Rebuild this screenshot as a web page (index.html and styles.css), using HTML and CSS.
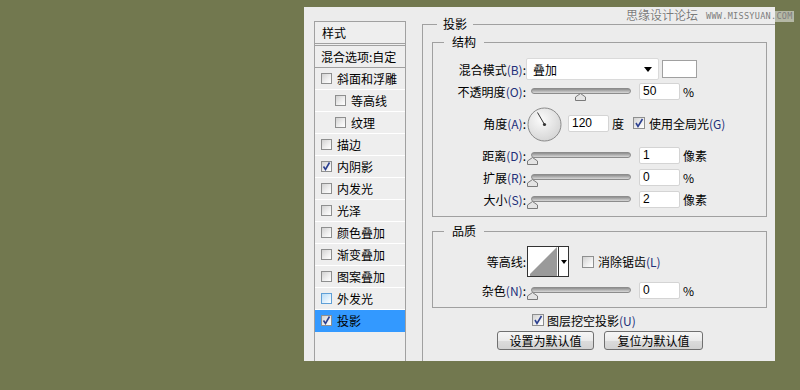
FILE: index.html
```html
<!DOCTYPE html>
<html lang="zh-CN">
<head>
<meta charset="utf-8">
<title>图层样式 - 投影</title>
<link rel="stylesheet" href="styles.css">
</head>
<body>
<div class="stage">
  <div class="dialog">
    <div class="styles-list">
      <div class="list-head">样式</div>
      <div class="list-blend">混合选项:自定</div>
      <div class="item"><span class="cb"></span><span>斜面和浮雕</span></div>
      <div class="item sub"><span class="cb"></span><span>等高线</span></div>
      <div class="item sub"><span class="cb"></span><span>纹理</span></div>
      <div class="item"><span class="cb"></span><span>描边</span></div>
      <div class="item"><span class="cb checked"><svg viewBox="0 0 11 11" width="11" height="11"><path d="M2.5 5.5 L4.5 8.5 L8.5 1.5" fill="none" stroke="#2b3f8f" stroke-width="1.6"/></svg></span><span>内阴影</span></div>
      <div class="item"><span class="cb"></span><span>内发光</span></div>
      <div class="item"><span class="cb"></span><span>光泽</span></div>
      <div class="item"><span class="cb"></span><span>颜色叠加</span></div>
      <div class="item"><span class="cb"></span><span>渐变叠加</span></div>
      <div class="item"><span class="cb"></span><span>图案叠加</span></div>
      <div class="item"><span class="cb hover"></span><span>外发光</span></div>
      <div class="item selected"><span class="cb checked"><svg viewBox="0 0 11 11" width="11" height="11"><path d="M2.5 5.5 L4.5 8.5 L8.5 1.5" fill="none" stroke="#2b3f8f" stroke-width="1.6"/></svg></span><span>投影</span></div>
    </div>

    <div class="main">
      <span class="legend legend-outer">投影</span>

      <div class="box structure">
        <span class="legend legend-inner">结构</span>

        <div class="row">
          <span class="label">混合模式<span class="mn">(B)</span>:</span>
          <div class="select"><span>叠加</span><svg class="arrow" width="8" height="5" viewBox="0 0 8 5"><path d="M0 0 H8 L4 5 Z" fill="#000"/></svg></div>
          <span class="swatch"></span>
        </div>

        <div class="row">
          <span class="label">不透明度<span class="mn">(O)</span>:</span>
          <div class="slider"><span class="track"></span><svg class="thumb" style="left:44px" width="11" height="8" viewBox="0 0 11 8"><path d="M0.5 7.5 V4 L5.5 0.5 L10.5 4 V7.5 Z" fill="#e4e4e4" stroke="#7a7a7a"/></svg></div>
          <span class="field">50</span>
          <span class="unit">%</span>
        </div>

        <div class="row row-angle">
          <span class="label">角度<span class="mn">(A)</span>:</span>
          <svg class="dial" width="35" height="35" viewBox="0 0 35 35">
            <defs>
              <radialGradient id="dg" cx="0.4" cy="0.35" r="0.7">
                <stop offset="0" stop-color="#fbfbfb"/>
                <stop offset="1" stop-color="#d4d4d4"/>
              </radialGradient>
            </defs>
            <circle cx="17.5" cy="17.5" r="16.5" fill="url(#dg)" stroke="#8a8a8a"/>
            <line x1="17.5" y1="17.5" x2="10.5" y2="5.5" stroke="#333" stroke-width="1"/>
            <circle cx="17.5" cy="17.5" r="1.6" fill="#333"/>
          </svg>
          <span class="field angle-field">120</span>
          <span class="unit deg">度</span>
          <span class="cb big checked global-cb"><svg viewBox="0 0 12 12" width="12" height="12"><path d="M3 6 L5 9.5 L9.5 2" fill="none" stroke="#2b3f8f" stroke-width="1.6"/></svg></span>
          <span class="cb-text">使用全局光<span class="mn">(G)</span></span>
        </div>

        <div class="row">
          <span class="label">距离<span class="mn">(D)</span>:</span>
          <div class="slider"><span class="track"></span><svg class="thumb" style="left:-4px" width="11" height="8" viewBox="0 0 11 8"><path d="M0.5 7.5 V4 L5.5 0.5 L10.5 4 V7.5 Z" fill="#e4e4e4" stroke="#7a7a7a"/></svg></div>
          <span class="field">1</span>
          <span class="unit">像素</span>
        </div>

        <div class="row">
          <span class="label">扩展<span class="mn">(R)</span>:</span>
          <div class="slider"><span class="track"></span><svg class="thumb" style="left:-4px" width="11" height="8" viewBox="0 0 11 8"><path d="M0.5 7.5 V4 L5.5 0.5 L10.5 4 V7.5 Z" fill="#e4e4e4" stroke="#7a7a7a"/></svg></div>
          <span class="field">0</span>
          <span class="unit">%</span>
        </div>

        <div class="row">
          <span class="label">大小<span class="mn">(S)</span>:</span>
          <div class="slider"><span class="track"></span><svg class="thumb" style="left:-4px" width="11" height="8" viewBox="0 0 11 8"><path d="M0.5 7.5 V4 L5.5 0.5 L10.5 4 V7.5 Z" fill="#e4e4e4" stroke="#7a7a7a"/></svg></div>
          <span class="field">2</span>
          <span class="unit">像素</span>
        </div>
      </div>

      <div class="box quality">
        <span class="legend legend-inner">品质</span>

        <div class="row row-contour">
          <span class="label">等高线:</span>
          <div class="contour">
            <svg class="curve" width="30" height="29" viewBox="0 0 30 29"><rect width="30" height="29" fill="#fff"/><path d="M2 27 L29 0 V29 H2 Z" fill="#9a9a9a"/></svg>
            <span class="contour-drop"><svg width="6" height="4" viewBox="0 0 6 4"><path d="M0 0 H6 L3 4 Z" fill="#000"/></svg></span>
          </div>
          <span class="cb big aa-cb"></span>
          <span class="cb-text">消除锯齿<span class="mn">(L)</span></span>
        </div>

        <div class="row row-noise">
          <span class="label">杂色<span class="mn">(N)</span>:</span>
          <div class="slider"><span class="track"></span><svg class="thumb" style="left:-4px" width="11" height="8" viewBox="0 0 11 8"><path d="M0.5 7.5 V4 L5.5 0.5 L10.5 4 V7.5 Z" fill="#e4e4e4" stroke="#7a7a7a"/></svg></div>
          <span class="field">0</span>
          <span class="unit">%</span>
        </div>
      </div>

      <div class="knockout">
        <span class="cb big checked"><svg viewBox="0 0 12 12" width="12" height="12"><path d="M3 6 L5 9.5 L9.5 2" fill="none" stroke="#2b3f8f" stroke-width="1.6"/></svg></span>
        <span class="cb-text">图层挖空投影<span class="mn">(U)</span></span>
      </div>

      <div class="buttons">
        <span class="btn btn-set">设置为默认值</span>
        <span class="btn btn-reset">复位为默认值</span>
      </div>
    </div>
  </div>

  <div class="watermark"><span class="wm-cn">思缘设计论坛</span><span class="wm-en">WWW.MISSYUAN.COM</span></div>
</div>
</body>
</html>
```

FILE: styles.css
```css
* { box-sizing: border-box; }

body {
  margin: 0;
  background: #72784f;
  font-family: "Noto Sans CJK SC", "Noto Sans", sans-serif;
  font-size: 12px;
  color: #000;
}

.stage {
  position: relative;
  width: 800px;
  height: 390px;
  padding: 7px 0 0 304px;
}

.dialog {
  width: 471px;
  height: 354px;
  background: #ececec;
  display: flex;
  align-items: flex-start;
  overflow: hidden;
}

/* ---------- left list ---------- */
.styles-list {
  margin: 14px 0 0 10px;
  width: 92px;
  height: 340px;
  border: 1px solid #a0a0a0;
  border-bottom: none;
  background: #eeeeee;
  flex-shrink: 0;
}

.list-head {
  height: 22px;
  line-height: 21px;
  padding-left: 7px;
  border-bottom: 1px solid #a0a0a0;
}

.list-blend {
  margin-top: 1px;
  height: 23px;
  line-height: 21px;
  padding-left: 6px;
  border-top: 1px solid #a0a0a0;
  border-bottom: 1px solid #a0a0a0;
  white-space: nowrap;
}

.item {
  display: flex;
  align-items: center;
  gap: 5px;
  height: 22px;
  padding-left: 6px;
  border-bottom: 1px solid #ffffff;
  white-space: nowrap;
}

.item.sub { padding-left: 20px; }

.item.selected {
  background: #3399ff;
  border-bottom-color: #3399ff;
}

.cb {
  display: inline-flex;
  align-items: center;
  justify-content: center;
  width: 11px;
  height: 11px;
  border: 1px solid #8e8f8f;
  background: linear-gradient(135deg, #d2d2d2 0%, #f0f0f0 60%, #ffffff 100%);
  flex-shrink: 0;
}

.cb svg { display: block; margin: -1px; }

.cb.big {
  width: 12px;
  height: 12px;
}

.cb.hover {
  border-color: #5f9fd6;
  background: linear-gradient(135deg, #b9dcf6 0%, #e2f1fc 60%, #ffffff 100%);
}

/* ---------- right column ---------- */
.main {
  position: relative;
  flex: 1;
  margin: 17px 0 0 16px;
  height: 337px;
  border-left: 1px solid #a0a0a0;
  border-top: 1px solid #a0a0a0;
}

.legend {
  position: absolute;
  top: -9px;
  line-height: 16px;
  background: #ececec;
  white-space: nowrap;
}

.legend-outer { left: 14px; padding: 0 6px; }
.legend-inner { left: 11px; padding: 0 8px; }

.box {
  position: relative;
  margin: 0 8px 0 9px;
  border: 1px solid #a0a0a0;
}

.structure {
  margin-top: 17px;
  height: 175px;
  padding-top: 15px;
}

.quality {
  margin-top: 14px;
  height: 77px;
  padding-top: 14px;
}

.row {
  display: flex;
  align-items: center;
  height: 22px;
  white-space: nowrap;
}

.label {
  width: 93px;
  flex-shrink: 0;
  text-align: right;
}

.mn { color: #22307a; }

.select {
  display: flex;
  align-items: center;
  justify-content: space-between;
  width: 133px;
  height: 22px;
  padding: 0 6px 0 6px;
  background: #fff;
  border: 1px solid #dadada;
  border-radius: 2px;
}

.select .arrow { display: block; margin-right: 0; }

.swatch {
  margin-left: 3px;
  width: 35px;
  height: 18px;
  background: #fff;
  border: 1px solid #a0a0a0;
}

.slider {
  position: relative;
  margin: 7px 0 0 5px;
  width: 100px;
  height: 14px;
  flex-shrink: 0;
}

.track {
  display: block;
  height: 6px;
  border-radius: 3px;
  border: 1px solid #8c8c8c;
  background: linear-gradient(#8e8e8e, #d8d8d8);
}

.thumb {
  position: absolute;
  top: 5px;
  display: block;
}

.field {
  margin-left: 8px;
  width: 41px;
  height: 17px;
  line-height: 15px;
  padding-left: 3px;
  background: #fff;
  border: 1px solid #d4d4d4;
  border-radius: 2px;
  font-family: "Liberation Sans", Arial, sans-serif;
  font-size: 12px;
  flex-shrink: 0;
}

.unit { margin-left: 3px; }

.row-angle {
  height: 42px;
}

.dial {
  display: block;
  margin: 3px 0 0 1px;
  flex-shrink: 0;
}

.angle-field { margin-left: 6px; }
.unit.deg { margin-left: 3px; }
.global-cb { margin-left: 9px; }
.cb-text { margin-left: 4px; }

/* quality */
.row-contour { height: 31px; }

.contour {
  display: flex;
  margin-left: 1px;
  width: 42px;
  height: 31px;
  border: 1px solid #333;
  background: #fff;
}

.curve { display: block; }

.contour-drop {
  display: flex;
  align-items: center;
  justify-content: center;
  flex: 1;
  border-left: 1px solid #333;
  background: #fff;
}

.aa-cb { margin-left: 13px; }

.row-noise {
  margin-top: 3px;
  height: 20px;
}

/* bottom */
.knockout {
  display: flex;
  align-items: center;
  margin-top: 5px;
  height: 14px;
  padding-left: 109px;
  white-space: nowrap;
}

.knockout .cb-text { margin-left: 3px; }

.buttons {
  display: flex;
  gap: 10px;
  margin: 4px 0 0 74px;
}

.btn {
  display: flex;
  align-items: center;
  justify-content: center;
  height: 19px;
  border: 1px solid #707070;
  border-radius: 3px;
  background: linear-gradient(#f6f6f6 0%, #ebebeb 50%, #dcdcdc 51%, #d2d2d2 100%);
  white-space: nowrap;
}

.btn-set { width: 97px; }
.btn-reset { width: 99px; }

/* watermark overlay */
.watermark {
  position: absolute;
  top: 7px;
  left: 626px;
  display: flex;
  align-items: center;
  gap: 7px;
  white-space: nowrap;
}

.wm-cn {
  font-size: 12px;
  line-height: 16px;
  color: #7a7a7a;
  text-shadow: 0 0 1px #fff, 0 0 1px #fff;
}

.wm-en {
  margin-top: 2px;
  padding: 1px 1px;
  font-family: "DejaVu Sans Mono", "Liberation Mono", monospace;
  font-size: 8.5px;
  letter-spacing: 0.3px;
  line-height: 9px;
  color: #7d7d7d;
  background: rgba(236, 236, 236, 0.55);
}
```
